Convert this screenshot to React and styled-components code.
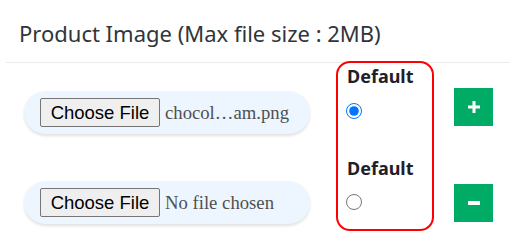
import React from "react"
import styled, { createGlobalStyle } from "styled-components"

const GlobalStyle = createGlobalStyle`
  body {
    margin: 0;
    background: #fff;
    font-family: "Noto Sans", "Open Sans", sans-serif;
  }
`

const Panel = styled.div`
  margin-left: 6px;
  width: 504px;
`

const Header = styled.div`
  padding: 18px 0 14px 13px;
  font-size: 22px;
  line-height: 30px;
  color: #30353b;
  border-bottom: 1px solid #ececec;
`

const Body = styled.div`
  display: flex;
  align-items: flex-start;
`

const FileColumn = styled.div`
  display: flex;
  flex-direction: column;
  gap: 47px;
  padding: 28px 0 0 18px;
`

const FilePill = styled.div`
  width: 286px;
  height: 43px;
  box-sizing: border-box;
  padding-left: 16px;
  display: flex;
  align-items: center;
  gap: 5px;
  background: #edf6ff;
  border-radius: 22px;
  box-shadow: 0 2px 3px rgba(0, 0, 0, 0.12);
`

const ChooseButton = styled.button`
  width: 120px;
  height: 29px;
  padding: 0;
  font-family: "Liberation Sans", Arial, sans-serif;
  font-size: 18.5px;
  color: #000;
  background: #efefef;
  border: 1px solid #767676;
  border-radius: 2px;
`

const FileName = styled.span`
  font-family: "Liberation Serif", "Times New Roman", serif;
  font-size: 18.7px;
  color: #505050;
`

const DefaultBox = styled.div`
  margin: -2px 0 0 26px;
  width: 98px;
  height: 170px;
  box-sizing: border-box;
  border: 2px solid #f00;
  border-radius: 14px;
  padding: 1px 0 0 9px;
  display: flex;
  flex-direction: column;
`

const DefaultLabel = styled.div`
  font-size: 18px;
  font-weight: 700;
  line-height: 24.5px;
  color: #1e2127;
  margin-top: ${(p) => p.$top || 0}px;
`

const Radio = styled.input.attrs({ type: "radio", name: "default" })`
  width: 16px;
  height: 16px;
  margin: 14px 0 0 -1px;
  accent-color: #0075ff;
`

const ActionColumn = styled.div`
  display: flex;
  flex-direction: column;
  gap: 58px;
  padding: 25px 0 0 20px;
`

const ActionButton = styled.button`
  width: 39px;
  height: 38px;
  border: none;
  padding: 0;
  background: #00ab66;
  display: flex;
  align-items: center;
  justify-content: center;
`

const PlusIcon = () => (
  <svg width="12" height="12" viewBox="0 0 12 12">
    <rect x="4.5" y="0" width="3" height="12" fill="#fff" />
    <rect x="0" y="4.5" width="12" height="3" fill="#fff" />
  </svg>
)

const MinusIcon = () => (
  <svg width="12" height="12" viewBox="0 0 12 12">
    <rect x="0" y="4" width="12" height="4" fill="#fff" />
  </svg>
)

const App = () => {
  return (
    <>
      <GlobalStyle />
      <Panel>
        <Header>Product Image (Max file size : 2MB)</Header>
        <Body>
          <FileColumn>
            <FilePill>
              <ChooseButton>Choose File</ChooseButton>
              <FileName>chocol…am.png</FileName>
            </FilePill>
            <FilePill>
              <ChooseButton>Choose File</ChooseButton>
              <FileName>No file chosen</FileName>
            </FilePill>
          </FileColumn>
          <DefaultBox>
            <DefaultLabel>Default</DefaultLabel>
            <Radio defaultChecked />
            <DefaultLabel $top={37}>Default</DefaultLabel>
            <Radio />
          </DefaultBox>
          <ActionColumn>
            <ActionButton>
              <PlusIcon />
            </ActionButton>
            <ActionButton>
              <MinusIcon />
            </ActionButton>
          </ActionColumn>
        </Body>
      </Panel>
    </>
  )
}

export default App
